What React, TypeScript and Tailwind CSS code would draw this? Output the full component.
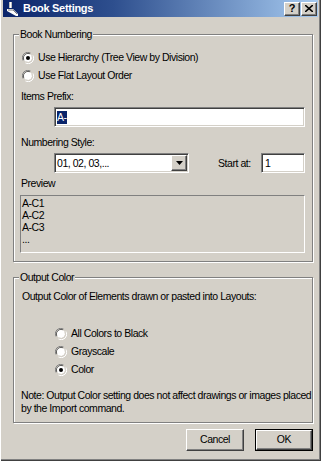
import React from 'react';

const font = { fontFamily: '"Liberation Sans", Arial, sans-serif' };

const txt = 'text-[10.5px] leading-[13px] tracking-[-0.45px] text-black whitespace-nowrap';

function Radio({ checked }: { checked?: boolean }) {
  return (
    <svg width="12" height="12" viewBox="0 0 12 12" className="shrink-0">
      <path d="M1 8.5 A5.5 5.5 0 0 1 8.5 1" fill="none" stroke="#808080" strokeWidth="1" />
      <path d="M2 8 A4.5 4.5 0 0 1 8 2" fill="none" stroke="#404040" strokeWidth="1" />
      <circle cx="6" cy="6" r="4" fill="#ffffff" />
      <path d="M3.5 11 A5.5 5.5 0 0 0 11 3.5" fill="none" stroke="#ffffff" strokeWidth="1" />
      <path d="M4 10 A4.5 4.5 0 0 0 10 4" fill="none" stroke="#d4d0c8" strokeWidth="1" />
      {checked && <circle cx="6" cy="6" r="2" fill="#000000" />}
    </svg>
  );
}

function RadioRow({ label, checked, className }: { label: string; checked?: boolean; className?: string }) {
  return (
    <div className={`flex items-center h-[13px] gap-[4px] ${className ?? ''}`}>
      <Radio checked={checked} />
      <span className={txt}>{label}</span>
    </div>
  );
}

function GroupBox({ title, className, children }: { title: string; className?: string; children: React.ReactNode }) {
  return (
    <div
      className={`relative border border-[#808080] shadow-[1px_1px_0_#ffffff,inset_1px_1px_0_#ffffff] flex flex-col ${className ?? ''}`}
    >
      <span className={`absolute -top-[7px] left-[5px] bg-[#d4d0c8] px-[1px] ${txt}`}>{title}</span>
      {children}
    </div>
  );
}

const sunken =
  'border border-t-[#808080] border-l-[#808080] border-b-white border-r-white shadow-[inset_1px_1px_0_#404040,inset_-1px_-1px_0_#d4d0c8]';

const raised =
  'border border-t-white border-l-white border-b-[#404040] border-r-[#404040] shadow-[inset_-1px_-1px_0_#808080]';

function TitleButton({ children }: { children: React.ReactNode }) {
  return (
    <div className={`w-[16px] h-[14px] bg-[#d4d0c8] ${raised} flex items-center justify-center text-[11px] font-bold leading-none text-black`}>
      {children}
    </div>
  );
}

export default function App() {
  return (
    <div
      style={font}
      className="w-[321px] h-[461px] bg-[#d4d0c8] px-[3px] flex flex-col overflow-hidden shadow-[inset_1px_0_0_#ffffff,inset_-1px_-1px_0_#404040,inset_-2px_-2px_0_#808080]"
    >
      {/* title bar */}
      <div className="h-[17px] shrink-0 flex items-center bg-[linear-gradient(to_right,#0a246a_0%,#2e4f8e_35%,#a6caf0_100%)] pl-[2px]">
        <svg width="14" height="14" viewBox="0 0 14 14" className="shrink-0">
          <rect x="4" y="0" width="3" height="6" fill="#c0c0c0" />
          <rect x="5" y="0" width="1" height="6" fill="#ffffff" />
          <path d="M2 7 L8 7 L13 12 L13 14 L11 14 L2 9 Z" fill="#ffffff" />
          <path d="M3 8 L8 8 L12 12" fill="none" stroke="#808080" strokeWidth="1" />
        </svg>
        <span className="ml-[4px] text-[11px] font-bold tracking-[-0.3px] text-white leading-none">Book Settings</span>
        <div className="ml-auto flex gap-[1px] pr-[1px]">
          <TitleButton>?</TitleButton>
          <TitleButton>
            <svg width="8" height="7" viewBox="0 0 8 7">
              <path d="M0 0 L8 7 M8 0 L0 7" stroke="#000" strokeWidth="1.6" />
            </svg>
          </TitleButton>
        </div>
      </div>

      {/* Book Numbering */}
      <GroupBox title="Book Numbering" className="ml-[10px] mt-[17px] w-[300px] h-[228px] shrink-0">
        <RadioRow label="Use Hierarchy (Tree View by Division)" checked className="ml-[8px] mt-[16px]" />
        <RadioRow label="Use Flat Layout Order" className="ml-[8px] mt-[5px]" />
        <span className={`ml-[7px] mt-[8px] ${txt}`}>Items Prefix:</span>
        <div className={`ml-[40px] mt-[4px] w-[251px] h-[20px] bg-white ${sunken} flex items-center pl-[2px]`}>
          <span className="bg-[#0a246a] text-white text-[10.5px] leading-[13px] tracking-[-0.45px]">A-</span>
        </div>
        <span className={`ml-[7px] mt-[9px] ${txt}`}>Numbering Style:</span>
        <div className="mt-[4px] ml-[40px] flex items-center h-[20px]">
          <div className={`w-[135px] h-[20px] bg-white ${sunken} flex items-center pl-[2px] pr-[1px]`}>
            <span className={txt}>01, 02, 03,...</span>
            <div className={`ml-auto w-[16px] h-[16px] bg-[#d4d0c8] ${raised} flex items-center justify-center`}>
              <svg width="7" height="4" viewBox="0 0 7 4">
                <path d="M0 0 H7 L3.5 4 Z" fill="#000" />
              </svg>
            </div>
          </div>
          <span className={`ml-[29px] ${txt}`}>Start at:</span>
          <div className={`ml-auto mr-[7px] w-[44px] h-[20px] bg-white ${sunken} flex items-center pl-[3px]`}>
            <span className={txt}>1</span>
          </div>
        </div>
        <span className={`ml-[7px] mt-[4px] ${txt}`}>Preview</span>
        <div className="ml-[6px] mt-[5px] w-[285px] h-[58px] border border-t-[#808080] border-l-[#808080] border-b-white border-r-white pl-[1px] pt-[1px] flex flex-col text-[10.5px] leading-[12px] tracking-[-0.45px] text-black">
          <span>A-C1</span>
          <span>A-C2</span>
          <span>A-C3</span>
          <span>...</span>
        </div>
      </GroupBox>

      {/* Output Color */}
      <GroupBox title="Output Color" className="ml-[10px] mt-[15px] w-[300px] h-[146px] shrink-0">
        <span className={`ml-[8px] mt-[12px] ${txt}`}>Output Color of Elements drawn or pasted into Layouts:</span>
        <RadioRow label="All Colors to Black" className="ml-[41px] mt-[24px]" />
        <RadioRow label="Grayscale" className="ml-[41px] mt-[5px]" />
        <RadioRow label="Color" checked className="ml-[41px] mt-[5px]" />
        <p className={`ml-[7px] mt-[13px] ${txt} leading-[12px]`}>
          Note: Output Color setting does not affect drawings or images placed
          <br />
          by the Import command.
        </p>
      </GroupBox>

      {/* buttons */}
      <div className="mt-[6px] flex justify-end gap-[11px] pr-[5px]">
        <button className={`w-[58px] h-[22px] bg-[#d4d0c8] ${raised} text-[10.5px] tracking-[-0.45px] text-black`}>Cancel</button>
        <button className="w-[58px] h-[22px] bg-[#d4d0c8] border border-black p-0">
          <div className={`w-full h-full ${raised} flex items-center justify-center text-[10.5px] tracking-[-0.45px] text-black`}>OK</div>
        </button>
      </div>
    </div>
  );
}
